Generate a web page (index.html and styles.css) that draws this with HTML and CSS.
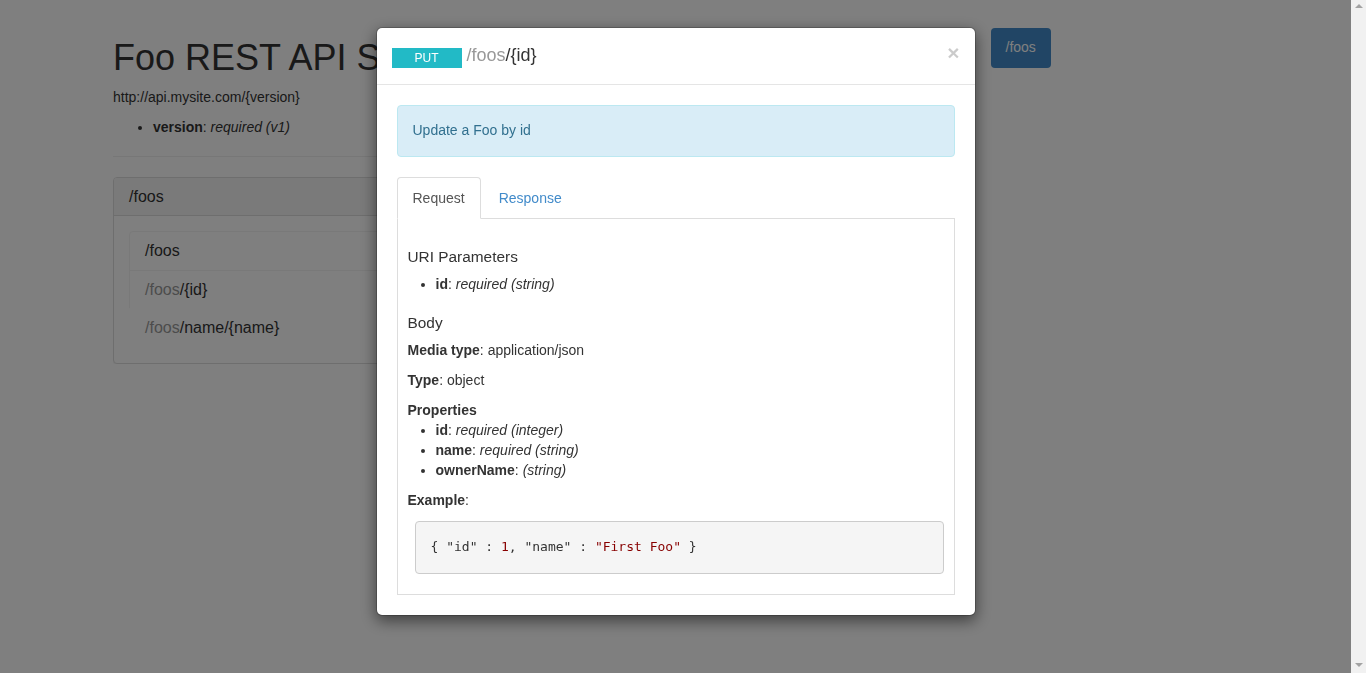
FILE: index.html
```html
<!DOCTYPE html>
<html>
<head>
<meta charset="utf-8">
<title>Foo REST API Spec</title>
<link rel="stylesheet" href="styles.css">
</head>
<body class="modal-open">
<div class="container">
  <div class="row">
    <div class="col-main">
      <h1 class="page-title">Foo REST API Spec</h1>
      <p class="base-uri">http://api.mysite.com/{version}</p>
      <ul class="plain-list">
        <li><strong>version</strong>: <em>required (v1)</em></li>
      </ul>
      <hr class="divider">
      <div class="panel">
        <div class="panel-heading"><h3 class="panel-title">/foos</h3></div>
        <div class="panel-body">
          <div class="list-group">
            <div class="list-group-item">/foos</div>
            <div class="list-group-item"><span class="muted">/foos</span>/{id}</div>
            <div class="list-group-item"><span class="muted">/foos</span>/name/{name}</div>
          </div>
        </div>
      </div>
    </div>
    <div class="col-side">
      <ul class="nav-pills">
        <li class="active"><a href="#foos">/foos</a></li>
      </ul>
    </div>
  </div>
</div>

<div class="modal-backdrop"></div>
<div class="modal">
  <div class="modal-dialog">
    <div class="modal-content">
      <div class="modal-header">
        <h4 class="modal-title"><span class="badge badge-put">PUT</span><span class="path"><span class="muted">/foos</span>/{id}</span></h4>
        <button class="close" type="button">×</button>
      </div>
      <div class="modal-body">
        <div class="alert-info">Update a Foo by id</div>
        <ul class="nav-tabs">
          <li class="tab active"><a href="#req">Request</a></li>
          <li class="tab"><a href="#res">Response</a></li>
        </ul>
        <div class="tab-content">
          <h3 class="section-title">URI Parameters</h3>
          <ul class="param-list">
            <li><strong>id</strong>: <em>required (string)</em></li>
          </ul>
          <h3 class="section-title">Body</h3>
          <p class="field"><strong>Media type</strong>: application/json</p>
          <p class="field"><strong>Type</strong>: object</p>
          <div class="field-tight"><strong>Properties</strong></div>
          <ul class="param-list">
            <li><strong>id</strong>: <em>required (integer)</em></li>
            <li><strong>name</strong>: <em>required (string)</em></li>
            <li><strong>ownerName</strong>: <em>(string)</em></li>
          </ul>
          <p class="field"><strong>Example</strong>:</p>
          <pre class="example"><code>{ "id" : <span class="num">1</span>, "name" : <span class="str">"First Foo"</span> }</code></pre>
        </div>
      </div>
    </div>
  </div>
</div>
<div class="scrollbar">
  <span class="arrow-up"></span>
  <span class="arrow-down"></span>
</div>
</body>
</html>
```
FILE: styles.css
```css
* { box-sizing: border-box; }
html, body { margin: 0; padding: 0; }
body {
  font-family: "Liberation Sans", Arial, Helvetica, sans-serif;
  font-size: 14px;
  line-height: 1.428571;
  color: #333;
  background: #fff;
}
body.modal-open { overflow: hidden; }
a { text-decoration: none; }

.container {
  width: 1170px;
  margin: 0 auto;
  padding: 0 15px;
}
.row {
  display: flex;
  margin: 0 -15px;
}
.col-main {
  width: 75%;
  padding: 0 15px;
}
.col-side {
  width: 25%;
  padding: 28px 15px 0;
}

.page-title {
  font-size: 36px;
  font-weight: 500;
  line-height: 1.1;
  margin: 38px 0 10px;
}
.base-uri { margin: 0 0 10px; }
.plain-list { margin: 0 0 10px; padding-left: 40px; }

.divider {
  margin: 18px 0 20px;
  border: 0;
  border-top: 1px solid #eee;
  height: 0;
}

.panel {
  border: 1px solid #ddd;
  border-radius: 4px;
  background: #fff;
  box-shadow: 0 1px 1px rgba(0,0,0,.05);
}
.panel-heading {
  background: #f5f5f5;
  border-bottom: 1px solid #ddd;
  padding: 10px 15px;
  border-radius: 3px 3px 0 0;
}
.panel-title {
  margin: 0;
  font-size: 16px;
  font-weight: 500;
  line-height: 1.1;
}
.panel-body { padding: 15px; }
.list-group { display: flex; flex-direction: column; }
.list-group-item {
  padding: 10px 15px;
  border: 1px solid #f2f2f2;
  margin-bottom: -1px;
  font-size: 16px;
  line-height: 17.6px;
  background: #fff;
}
.list-group-item:first-child { border-radius: 4px 4px 0 0; }
.list-group-item:last-child { border-radius: 0 0 4px 4px; margin-bottom: 0; border-color: #fff; }
.muted { color: #999; }

.nav-pills { list-style: none; margin: 0; padding: 0; display: flex; }
.nav-pills a {
  display: block;
  padding: 10px 15px;
  border-radius: 4px;
  background: #428bca;
  color: #fff;
}

.modal-backdrop {
  position: fixed;
  inset: 0;
  background: rgba(0,0,0,.5);
  z-index: 1040;
}
.modal {
  position: fixed;
  top: 0;
  left: 0;
  bottom: 0;
  right: 15px;
  overflow: hidden;
  z-index: 1050;
}
.scrollbar {
  position: fixed;
  top: 0;
  right: 0;
  bottom: 0;
  width: 15px;
  background: #f1f1f1;
  z-index: 1060;
  display: flex;
  flex-direction: column;
  justify-content: space-between;
  align-items: center;
  padding: 4px 0 6px;
}
.arrow-up, .arrow-down {
  display: block;
  width: 0;
  height: 0;
  border-left: 4px solid transparent;
  border-right: 4px solid transparent;
}
.arrow-up { border-bottom: 4px solid #a3a3a3; }
.arrow-down { border-top: 4px solid #a3a3a3; }

.modal-dialog {
  width: 600px;
  margin: 27px auto 30px;
}
.modal-content {
  background: #fff;
  border: 1px solid rgba(0,0,0,.2);
  border-radius: 6px;
  box-shadow: 0 5px 15px rgba(0,0,0,.5);
  background-clip: padding-box;
}
.modal-header {
  padding: 15px;
  border-bottom: 1px solid #e5e5e5;
  display: flex;
  justify-content: space-between;
  align-items: flex-start;
}
.close {
  margin-top: -1px;
  padding: 0;
  border: 0;
  background: transparent;
  font-family: "Liberation Sans", Arial, sans-serif;
  font-size: 21px;
  font-weight: bold;
  line-height: 1;
  color: #000;
  opacity: .2;
  cursor: pointer;
}
.modal-title {
  margin: 0;
  font-size: 18px;
  font-weight: 500;
  line-height: 1.428571;
  display: flex;
  align-items: baseline;
}
.badge {
  display: block;
  min-width: 70px;
  margin-right: 5px;
  font-size: 12px;
  line-height: 20px;
  font-weight: normal;
  text-align: center;
  color: #fff;
  position: relative;
  top: 1px;
}
.badge-put { background: #22bac6; }

.modal-body { padding: 20px; }
.alert-info {
  padding: 15px;
  margin-bottom: 20px;
  border: 1px solid #bce8f1;
  border-radius: 4px;
  background: #d9edf7;
  color: #31708f;
}

.nav-tabs {
  list-style: none;
  margin: 0;
  padding: 0;
  display: flex;
  border-bottom: 1px solid #ddd;
}
.tab { margin-bottom: -1px; margin-right: 2px; }
.tab a {
  display: block;
  padding: 10px 15px;
  line-height: 20px;
  border: 1px solid transparent;
  border-radius: 4px 4px 0 0;
  color: #428bca;
}
.tab.active a {
  color: #555;
  background: #fff;
  border-color: #ddd #ddd transparent;
}
.tab-content {
  border: 1px solid #ddd;
  border-top: 0;
  padding: 10px;
}
.section-title {
  font-size: 15.4px;
  font-weight: 500;
  line-height: 16px;
  margin: 20px 0 10px;
}
.param-list { margin: 0 0 10px; padding-left: 28px; }
.field { margin: 0 0 10px; }
.field-tight { margin: 0; }
.example {
  margin: 0 0 10px 7px;
  padding: 15px;
  background: #f5f5f5;
  border: 1px solid #ccc;
  border-radius: 4px;
  font-family: "Liberation Mono", "Courier New", monospace;
  font-size: 13px;
  line-height: 20px;
  color: #333;
  white-space: pre;
}
.example .num, .example .str { color: #800; }
```
